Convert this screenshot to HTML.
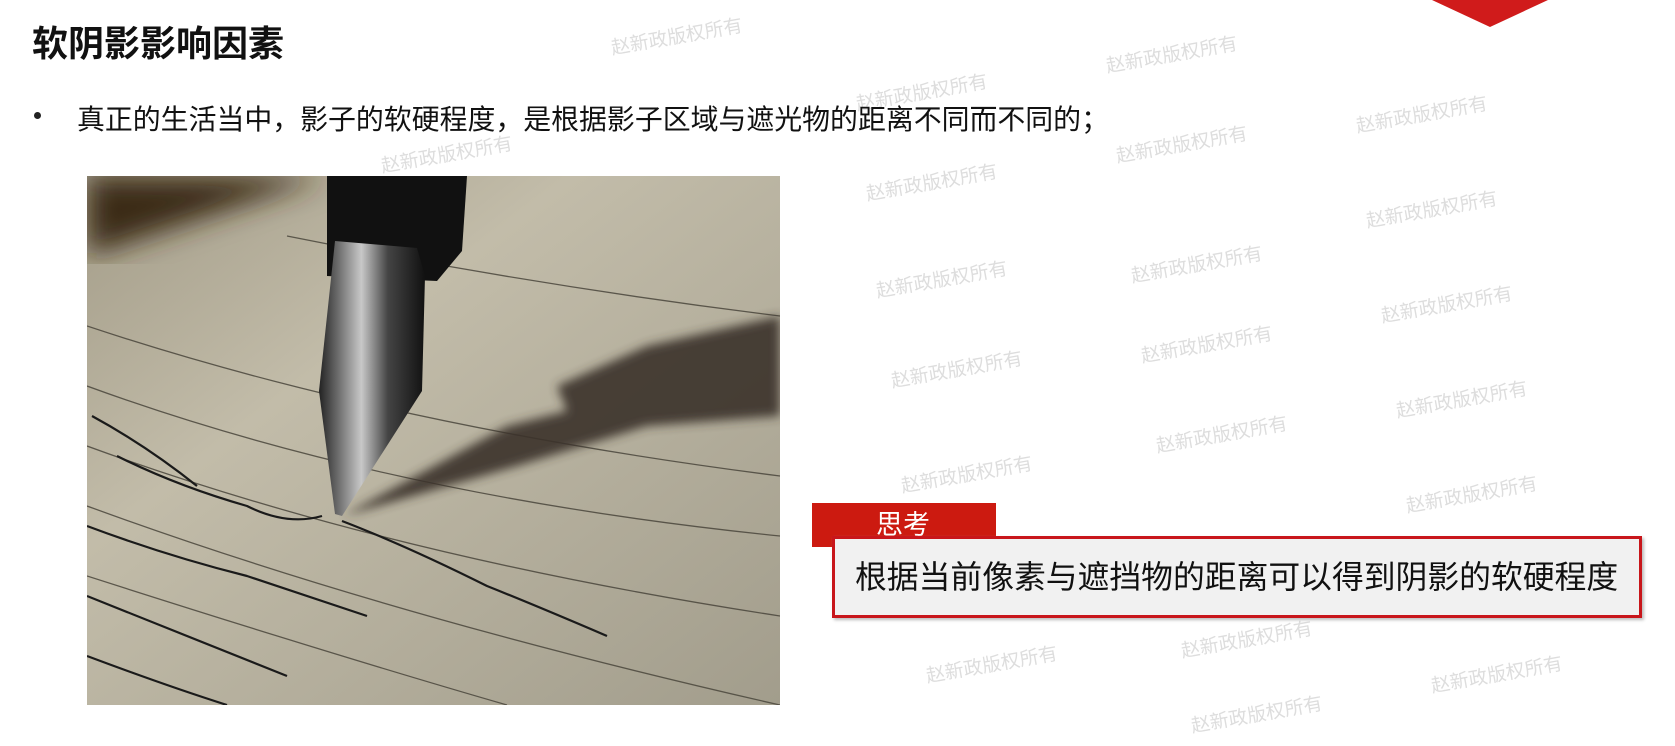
<!DOCTYPE html>
<html><head><meta charset="utf-8"><style>
html,body{margin:0;padding:0;background:#fff;}
body{width:1675px;height:746px;position:relative;overflow:hidden;font-family:"Liberation Sans","Noto Sans CJK SC",sans-serif;}
.t{position:absolute;left:32px;top:15px;font-size:36px;font-weight:bold;color:#111;}
.b{position:absolute;left:77px;top:98px;font-size:27.9px;color:#111;}
.dot{position:absolute;left:34px;top:112px;width:7px;height:7px;border-radius:50%;background:#222;}
.tri{position:absolute;left:1432px;top:0;width:0;height:0;border-left:58px solid transparent;border-right:58px solid transparent;border-top:27px solid #d01b1b;}
.tab{position:absolute;left:812px;top:503px;width:184px;height:44px;background:#cc1a10;color:#fff;font-size:27px;line-height:44px;text-indent:64px;}
.box{position:absolute;left:832px;top:536px;width:804px;height:76px;border:3px solid #c8161b;background:#f1f1f1;box-shadow:2px 2px 3px #bbb;font-size:31.8px;line-height:76px;text-indent:20px;color:#111;white-space:nowrap;}
.wm{position:absolute;color:#ddd;font-size:19px;transform:rotate(-10deg);white-space:nowrap;}
</style></head><body>
<div class="wm" style="left:610px;top:22px">赵新政版权所有</div>
<div class="wm" style="left:1105px;top:40px">赵新政版权所有</div>
<div class="wm" style="left:380px;top:140px">赵新政版权所有</div>
<div class="wm" style="left:855px;top:78px">赵新政版权所有</div>
<div class="wm" style="left:1355px;top:100px">赵新政版权所有</div>
<div class="wm" style="left:1115px;top:130px">赵新政版权所有</div>
<div class="wm" style="left:865px;top:168px">赵新政版权所有</div>
<div class="wm" style="left:1365px;top:195px">赵新政版权所有</div>
<div class="wm" style="left:1130px;top:250px">赵新政版权所有</div>
<div class="wm" style="left:875px;top:265px">赵新政版权所有</div>
<div class="wm" style="left:1380px;top:290px">赵新政版权所有</div>
<div class="wm" style="left:1140px;top:330px">赵新政版权所有</div>
<div class="wm" style="left:890px;top:355px">赵新政版权所有</div>
<div class="wm" style="left:1395px;top:385px">赵新政版权所有</div>
<div class="wm" style="left:1155px;top:420px">赵新政版权所有</div>
<div class="wm" style="left:900px;top:460px">赵新政版权所有</div>
<div class="wm" style="left:1405px;top:480px">赵新政版权所有</div>
<div class="wm" style="left:1180px;top:625px">赵新政版权所有</div>
<div class="wm" style="left:925px;top:650px">赵新政版权所有</div>
<div class="wm" style="left:1430px;top:660px">赵新政版权所有</div>
<div class="wm" style="left:1190px;top:700px">赵新政版权所有</div>
<div class="tri"></div>
<div class="t">软阴影影响因素</div>
<div class="dot"></div>
<div class="b">真正的生活当中，影子的软硬程度，是根据影子区域与遮光物的距离不同而不同的；</div>
<svg style="position:absolute;left:87px;top:176px" width="693" height="529" viewBox="0 0 693 529">
<defs>
<linearGradient id="p" x1="0" y1="0" x2="1" y2="1"><stop offset="0" stop-color="#a39c88"/><stop offset="0.35" stop-color="#c2bca9"/><stop offset="1" stop-color="#a29d8c"/></linearGradient>
<linearGradient id="n" x1="0" y1="0" x2="1" y2="0"><stop offset="0" stop-color="#222"/><stop offset="0.4" stop-color="#c8c8c8"/><stop offset="0.65" stop-color="#444"/><stop offset="1" stop-color="#111"/></linearGradient>
<filter id="bl"><feGaussianBlur stdDeviation="5"/></filter>
<filter id="bl2"><feGaussianBlur stdDeviation="14"/></filter>
</defs>
<rect width="693" height="529" fill="url(#p)"/>
<path d="M0 0 H240 L0 80 Z" fill="#3a2a18" filter="url(#bl2)"/>
<g stroke="#4a463c" stroke-width="1.3" fill="none" opacity="0.85">
<path d="M0 150 Q300 250 693 300"/><path d="M0 210 Q300 320 693 360"/><path d="M0 270 Q300 380 693 440"/><path d="M0 330 Q300 440 693 529"/><path d="M0 400 Q250 480 420 529"/><path d="M200 60 Q450 110 693 140"/>
</g>
<path d="M256 340 L420 250 L480 235 L470 210 L560 170 L693 140 L693 240 L560 250 L430 290 Z" fill="#3a3329" opacity="0.9" filter="url(#bl)"/>
<path d="M240 0 H380 L375 75 L350 105 L240 100 Z" fill="#111"/>
<path d="M248 65 L330 72 L338 100 L335 215 L255 340 L248 338 L232 215 Z" fill="url(#n)"/>
<g stroke="#1a1a1a" stroke-width="2.2" fill="none">
<path d="M5 240 Q60 270 110 310"/><path d="M30 280 Q90 310 160 330 Q200 350 235 340"/>
<path d="M255 345 Q320 370 400 410 Q450 430 520 460"/>
<path d="M0 350 Q80 380 160 400 Q220 420 280 440"/>
<path d="M0 420 Q100 460 200 500"/><path d="M0 480 Q80 510 140 529"/>
</g>
</svg>
<div class="tab">思考</div>
<div class="box">根据当前像素与遮挡物的距离可以得到阴影的软硬程度</div>
</body></html>
